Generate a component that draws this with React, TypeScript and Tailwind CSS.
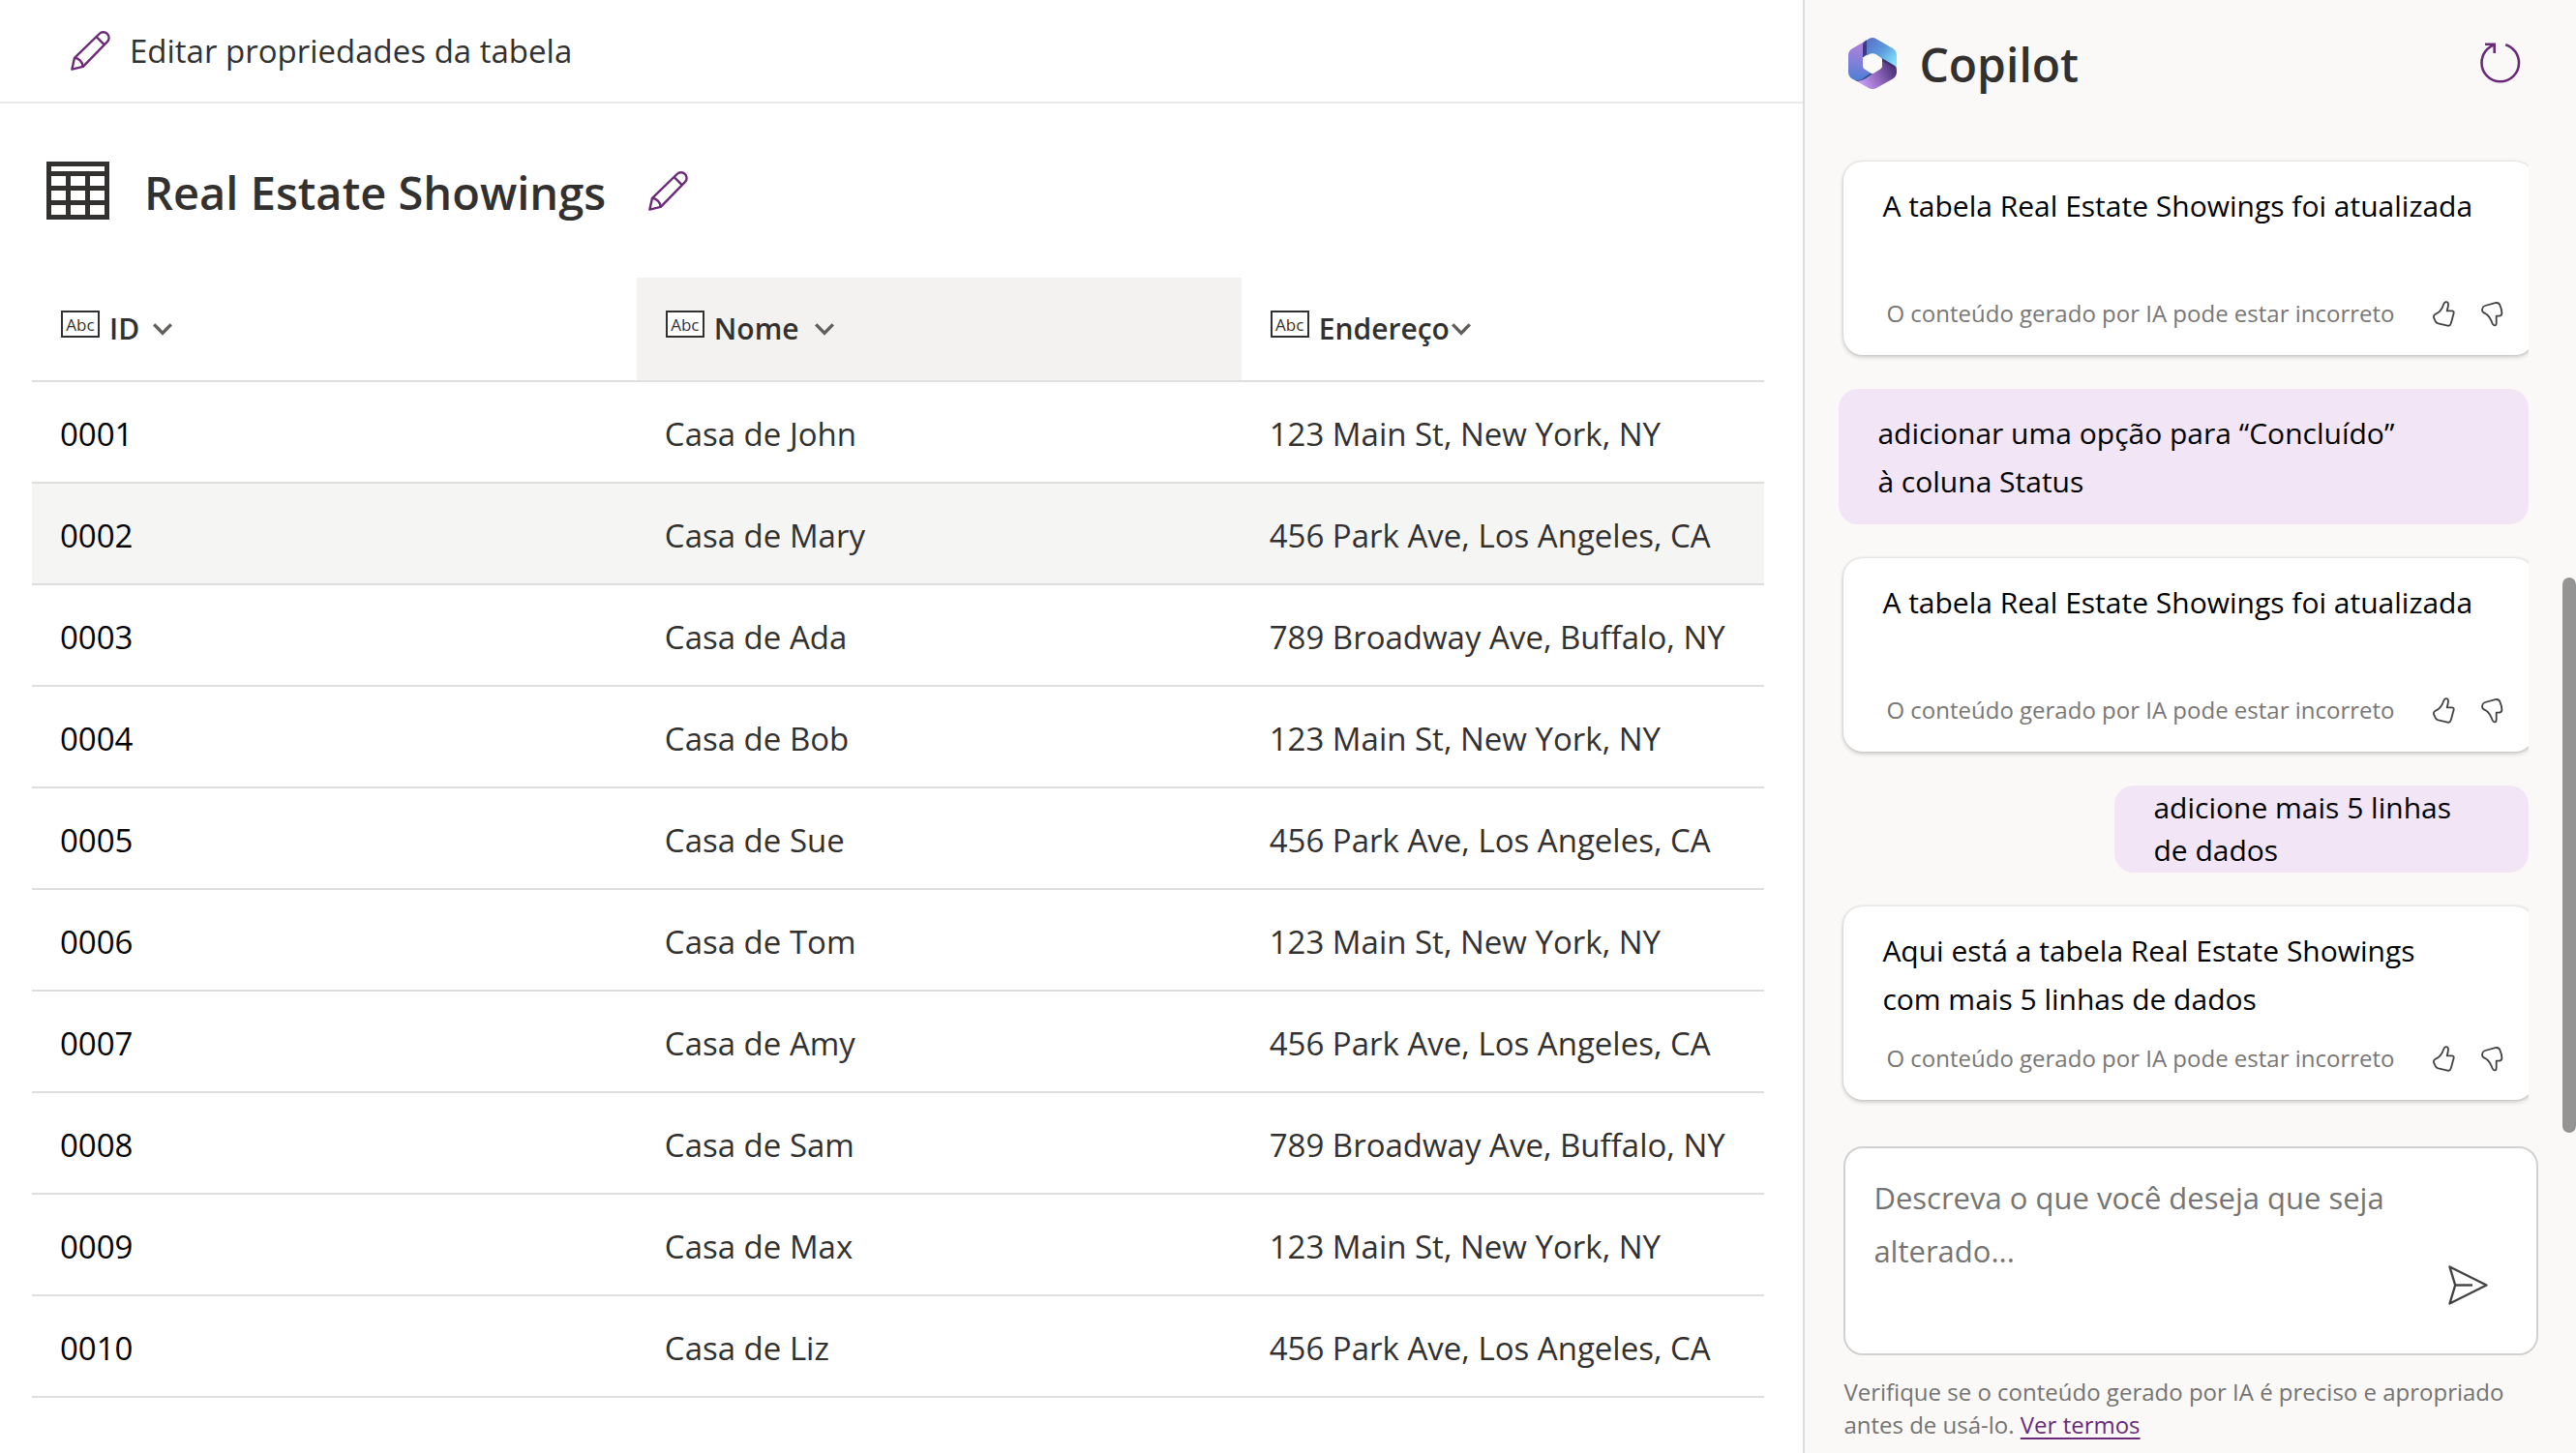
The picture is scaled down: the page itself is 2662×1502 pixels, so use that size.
import type { ReactNode } from "react";

type Showing = { id: string; name: string; address: string };

const MAIN_ST = "123 Main St, New York, NY";
const PARK_AVE = "456 Park Ave, Los Angeles, CA";
const BROADWAY = "789 Broadway Ave, Buffalo, NY";

const showings: Showing[] = [
  { id: "0001", name: "Casa de John", address: MAIN_ST },
  { id: "0002", name: "Casa de Mary", address: PARK_AVE },
  { id: "0003", name: "Casa de Ada", address: BROADWAY },
  { id: "0004", name: "Casa de Bob", address: MAIN_ST },
  { id: "0005", name: "Casa de Sue", address: PARK_AVE },
  { id: "0006", name: "Casa de Tom", address: MAIN_ST },
  { id: "0007", name: "Casa de Amy", address: PARK_AVE },
  { id: "0008", name: "Casa de Sam", address: BROADWAY },
  { id: "0009", name: "Casa de Max", address: MAIN_ST },
  { id: "0010", name: "Casa de Liz", address: PARK_AVE },
];

function PencilIcon() {
  return (
    <svg viewBox="0 0 41 41" className="size-[41px] shrink-0" fill="none" stroke="#6b2a78" strokeWidth="2.4" strokeLinejoin="round" aria-hidden="true">
      <path d="M1.4 39.6 4 27.8 29.600 3C31.800.8 35.600.6 37.800 2.900c2.400 2.300 2.400 6 .1 8.300L12.800 36.800z" />
      <path d="M4 27.800c4.600.4 8.200 4.200 8.800 9M26.600 6l8.300 8.300" />
    </svg>
  );
}

function TableIcon() {
  return (
    <svg viewBox="0 0 65 60" className="h-[60px] w-[65px] shrink-0" fill="#323130" aria-hidden="true">
      <path fillRule="evenodd" d="M0 0h65v60H0zM5 5v5h55V5zM5 15v10h15V15zM25 15v10h15V15zM45 15v10h15V15zM5 30v10h15V30zM25 30v10h15V30zM45 30v10h15V30zM5 45v10h15V45zM25 45v10h15V45zM45 45v10h15V45z" />
    </svg>
  );
}

function ChevronIcon() {
  return (
    <svg viewBox="0 0 20 13" className="h-[13px] w-5 shrink-0" fill="none" stroke="#605e5c" strokeWidth="3.4" aria-hidden="true">
      <path d="m1.200 1.400 8.800 9 8.800-9" />
    </svg>
  );
}

function RefreshIcon() {
  return (
    <svg viewBox="0 0 42 42" className="size-[42px]" fill="none" stroke="#6b2a78" strokeWidth="2.6" aria-hidden="true">
      <path d="M14.500 2.600C6.700 5.200 1.500 12.500 1.500 21c0 10.600 8.600 19.300 19.300 19.300S40 31.600 40 21c0-8.700-5.600-16.200-13.800-18.800" />
      <path d="M5 1.800h9.700V11" />
    </svg>
  );
}

function ThumbUpIcon() {
  return (
    <svg viewBox="0 0 23 27" className="h-[27px] w-[23px]" fill="none" stroke="#424242" strokeWidth="1.800" strokeLinejoin="round" aria-hidden="true">
      <path d="M13.400 1.100c1.800-.3 2.700 1 2.600 2.800-.1 2.200-.7 4.200-1.300 6.400h5c1.500 0 2.300 1.100 1.900 2.600l-2.900 10.600c-.5 1.700-1.800 2.500-3.500 2.100L5.600 23.400c-1.400-.4-2.300-1-2.800-2.300L1.300 18c-.9-2 .1-4 2.100-4.700 3.900-1.500 6-4.300 7.400-8.700.6-1.700.9-3.200 2.600-3.500z" />
    </svg>
  );
}

function ThumbDownIcon() {
  return (
    <svg viewBox="0 0 23 27" className="h-[27px] w-[23px]" fill="none" stroke="#424242" strokeWidth="1.800" strokeLinejoin="round" aria-hidden="true">
      <path d="M4.200 5 14.500 2.200c2.400-.6 4.100.1 4.900 2.200 1.200 2.900 2 5.700 2 8.400 0 2-1.200 2.800-3.100 2.800h-2.600v7.300c0 3-2.900 3.400-4 .6-1.400-3.700-2.900-7.500-6.300-9.800l-2.900-1.600C.9 11.200.8 9.500 1.300 7.900 1.700 6.300 2.600 5.400 4.200 5z" />
    </svg>
  );
}

function SendIcon() {
  return (
    <svg viewBox="0 0 41 41" className="size-[41px]" fill="none" stroke="#424242" strokeWidth="2.400" strokeLinejoin="round" aria-hidden="true">
      <path d="M1.500 1.500 39.500 20.500 1.500 39.500l5.700-19z" />
      <path d="M7.200 20.500H25" />
    </svg>
  );
}

function CopilotLogo() {
  return (
    <svg viewBox="0 0 50 53" className="h-[53px] w-[50px] shrink-0" aria-hidden="true">
      <defs>
        <linearGradient id="left" x1="12" y1="6" x2="8" y2="44" gradientUnits="userSpaceOnUse">
          <stop offset="0" stopColor="#ae7fdc" />
          <stop offset="0.5" stopColor="#8480da" />
          <stop offset="1" stopColor="#4d7fd4" />
        </linearGradient>
        <linearGradient id="right" x1="20" y1="4" x2="47" y2="28" gradientUnits="userSpaceOnUse">
          <stop offset="0" stopColor="#5a75cc" />
          <stop offset="0.5" stopColor="#5c9ddd" />
          <stop offset="1" stopColor="#85e4fb" />
        </linearGradient>
        <linearGradient id="bottom" x1="14" y1="48" x2="46" y2="32" gradientUnits="userSpaceOnUse">
          <stop offset="0" stopColor="#c69bf5" />
          <stop offset="0.5" stopColor="#9268be" />
          <stop offset="1" stopColor="#51377d" />
        </linearGradient>
      </defs>
      <path fill="url(#left)" d="M19 2.500 4 11.200C1.500 12.700 0 15.200 0 18v17.500c0 2.900 1.500 5.500 4 6.900l3 1.600c2.300.8 5 .3 7.500-1.200L24.500 37l-7-4.500c-1.600-1-2.500-2.700-2.500-4.500V20l5-3z" />
      <path fill="#333f82" d="M19.300 2.300v14.900L15 20.500V8c0-2.500 1.200-4.300 4.300-5.700z" />
      <path fill="url(#right)" d="M19 2.500 21 1.200c2.500-1.500 5.500-1.500 8 0l17 9.900c2.500 1.500 4 4.100 4 6.900v14L35 22.500c-.6-.9-1.300-1.500-2.200-2l-4.300-2.700c-2.300-1.400-4.900-1.400-7.200 0L19 19.300z" />
      <path fill="#45306f" d="M35 21.300 46.500 28c2.300 1.300 3.500 3 3.500 5.500L35 27z" />
      <path fill="url(#bottom)" d="M7 44c3 .6 6-.2 8.600-1.800L32.800 32.300c1.500-.9 2.200-2.500 2.200-4.300v-3.800l15 9v2.300c0 2.900-1.500 5.500-4 6.900l-17 9.700c-2.500 1.400-5.500 1.400-8 0z" />
      <path fill="#294a8c" d="M6.500 43.800c3 .6 5.500 0 8-1.300l8-5.600 2.500.4-6.500 4.500c-3.300 2-6.500 3.200-9.500 3z" />
      <path fill="#fbfaf8" d="M21.300 17.300c2.300-1.400 5.100-1.400 7.400 0l4.100 2.600c1.400.8 2.200 2.300 2.200 4V29c0 1.400-.8 2.700-2 3.500L27 36.300c-1.200.8-2.800.8-4 0l-6-3.800c-1.300-.8-2-2-2-3.500v-5.200c0-1.600.8-3.100 2.200-4z" />
    </svg>
  );
}

function ColumnHeader({ label, gap, active }: { label: string; gap: string; active?: boolean }) {
  return (
    <th scope="col" className={`h-[108px] border-b-2 border-[#e1dfdd] bg-clip-padding p-0 px-[30px] text-left align-middle font-semibold ${active ? "bg-[#f3f2f1]" : ""}`}>
      <button type="button" className={`flex items-center ${gap}`}>
        <span className="flex items-center gap-2.5">
          <span className="mb-2.5 flex h-7 w-10 items-center justify-center border-2 border-[#323130] bg-white text-[17px] leading-none font-normal" aria-hidden="true">
            Abc
          </span>
          <span className="text-[30px] leading-[40px]">{label}</span>
        </span>
        <ChevronIcon />
      </button>
    </th>
  );
}

function AssistantCard({ children }: { children: ReactNode }) {
  return (
    <article className="-mr-1.5 ml-[5px] rounded-[20px] bg-white pt-[21px] pr-8 pb-[26px] pl-10 shadow-[0_2px_5px_rgba(0,0,0,0.2),0_0_3px_rgba(0,0,0,0.14)]">
      <p className="min-h-[100px] text-[30px] leading-[50px]">{children}</p>
      <div className="mt-[19px] flex items-center pl-1">
        <p className="flex-1 text-[24px] leading-[34px] whitespace-nowrap text-[#797775]">O conteúdo gerado por IA pode estar incorreto</p>
        <div className="flex gap-[27px]">
          <button type="button" aria-label="Gostei">
            <ThumbUpIcon />
          </button>
          <button type="button" aria-label="Não gostei">
            <ThumbDownIcon />
          </button>
        </div>
      </div>
    </article>
  );
}

export default function App() {
  return (
    <div className="grid min-h-screen grid-cols-[7fr_3fr] bg-white font-['Open_Sans','Noto_Sans',sans-serif] text-[#323130]">
      <main className="min-w-0">
        <div className="flex h-[107px] items-center border-b-2 border-[#ebebeb] px-[73px]">
          <button type="button" className="flex items-center gap-5 text-[33px] leading-[44px]">
            <PencilIcon />
            Editar propriedades da tabela
          </button>
        </div>
        <div className="flex h-[180px] items-center gap-9 px-12">
          <TableIcon />
          <h1 className="pt-1 text-[47px] leading-[64px] font-semibold">Real Estate Showings</h1>
          <button type="button" aria-label="Editar nome da tabela" className="ml-2">
            <PencilIcon />
          </button>
        </div>
        <div className="pr-10 pl-[33px]">
          <table className="w-full table-fixed border-separate border-spacing-0">
            <colgroup>
              <col className="w-[34.9%]" />
              <col className="w-[34.9%]" />
              <col />
            </colgroup>
            <thead>
              <tr>
                <ColumnHeader label="ID" gap="gap-3.5" />
                <ColumnHeader label="Nome" gap="gap-4" active />
                <ColumnHeader label="Endereço" gap="gap-0.5" />
              </tr>
            </thead>
            <tbody>
              {showings.map((row) => (
                <tr key={row.id} className="text-[33px] leading-[44px] even:bg-[#f5f5f3] nth-[n+3]:bg-transparent">
                  <td className="h-[105px] border-b-2 border-[#dedede] px-[29px] pt-1 text-black">{row.id}</td>
                  <td className="border-b-2 border-[#dedede] px-[29px] pt-1">{row.name}</td>
                  <td className="border-b-2 border-[#dedede] px-[29px] pt-1 whitespace-nowrap">{row.address}</td>
                </tr>
              ))}
            </tbody>
          </table>
        </div>
      </main>

      <aside className="relative flex min-w-0 flex-col border-l-2 border-[#dddddd] bg-[#faf9f8]">
        <header className="flex h-[130px] items-center gap-[23px] pr-[57px] pl-[45px]">
          <CopilotLogo />
          <h2 className="flex-1 pt-1 text-[48px] leading-[64px] font-semibold">Copilot</h2>
          <button type="button" aria-label="Reiniciar conversa">
            <RefreshIcon />
          </button>
        </header>

        <section className="mr-[49px] flex flex-col gap-[35px] overflow-hidden pt-[37px] pb-6 pl-[35px] text-black" aria-label="Conversa">
          <AssistantCard>A tabela Real Estate Showings foi atualizada</AssistantCard>
          <p className="rounded-[20px] bg-[#f2e5f6] pt-[21px] pr-6 pb-[19px] pl-10 text-[30px] leading-[50px]">
            adicionar uma opção para “Concluído”
            <br />à coluna Status
          </p>
          <AssistantCard>A tabela Real Estate Showings foi atualizada</AssistantCard>
          <p className="w-[60%] self-end rounded-[20px] bg-[#f2e5f6] py-px pr-6 pl-10 text-[30px] leading-[44px]">
            adicione mais 5 linhas
            <br />
            de dados
          </p>
          <AssistantCard>
            Aqui está a tabela Real Estate Showings
            <br />
            com mais 5 linhas de dados
          </AssistantCard>
        </section>

        <footer className="pt-6 pr-[39px] pb-[11px] pl-10">
          <form className="flex rounded-[20px] border-2 border-[#d1d1d1] bg-white pr-[50px] pl-[29px]" onSubmit={(e) => e.preventDefault()}>
            <textarea
              aria-label="Mensagem para o Copilot"
              placeholder="Descreva o que você deseja que seja alterado..."
              className="h-[212px] min-w-0 flex-1 resize-none bg-transparent pt-6 text-[31px] leading-[55px] outline-none placeholder:text-[#757575]"
            />
            <button type="submit" aria-label="Enviar" className="mb-[50px] self-end">
              <SendIcon />
            </button>
          </form>
          <p className="mt-[21px] text-[24px] leading-[34px] text-[#757371]">
            Verifique se o conteúdo gerado por IA é preciso e apropriado antes de usá-lo.{" "}
            <a href="#termos" className="inline-block text-[#6b2a78] underline decoration-2 underline-offset-4">
              Ver termos
            </a>
          </p>
        </footer>

        <div className="absolute top-[597px] right-0 h-[574px] w-3.5 rounded-full bg-[#949494]" aria-hidden="true" />
      </aside>
    </div>
  );
}
